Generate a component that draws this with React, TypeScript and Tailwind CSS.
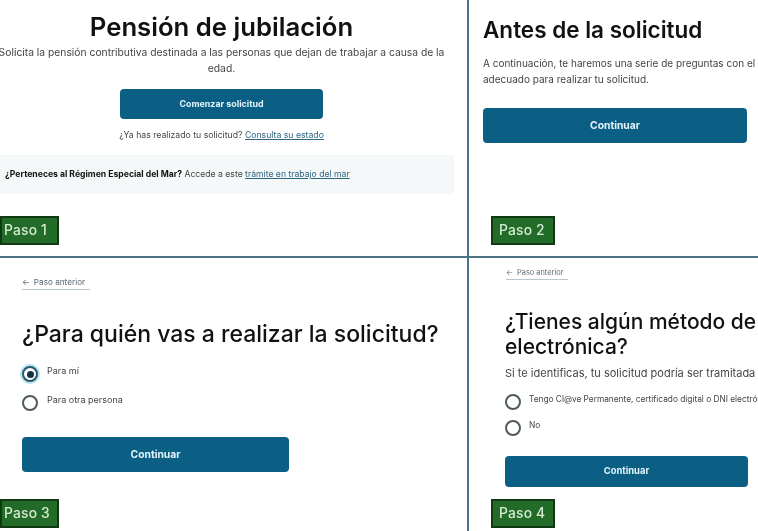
const font = { fontFamily: "Inter, 'Liberation Sans', sans-serif" };

const PasoBadge = ({ label, className }: { label: string; className: string }) => (
  <div
    className={`absolute flex h-[29px] items-center border-2 border-[#0f3a14] bg-[#226b28] text-[13.8px] font-medium tracking-[0.2px] text-[#d5ecd0] ${className}`}
  >
    {label}
  </div>
);

const PrimaryButton = ({ label, className }: { label: string; className: string }) => (
  <button className={`flex items-center justify-center rounded-[4px] bg-[#0c5f84] font-bold text-[#e3f5fb] ${className}`}>
    {label}
  </button>
);

const BackLink = ({ className }: { className: string }) => (
  <a className={`flex items-center gap-1 border-b border-[#b9c7cf] whitespace-nowrap text-[#5c6b74] ${className}`}>
    <span>←</span>
    <span>Paso anterior</span>
  </a>
);

const Radio = ({ checked }: { checked?: boolean }) =>
  checked ? (
    <span className="flex h-[16px] w-[16px] shrink-0 items-center justify-center rounded-full border-2 border-[#29566a] bg-white shadow-[0_0_0_2px_#b7e3ef]">
      <span className="h-[7px] w-[7px] rounded-full bg-[#123246]" />
    </span>
  ) : (
    <span className="h-[16px] w-[16px] shrink-0 rounded-full border-2 border-[#4d5a60] bg-white" />
  );

export default function App() {
  return (
    <div
      style={font}
      className="grid h-[531px] w-[758px] grid-cols-[469px_289px] grid-rows-[258px_273px] overflow-hidden bg-white blur-[0.35px]"
    >
      {/* Paso 1 */}
      <section className="relative border-r-2 border-b-2 border-[#4c7286] pt-[10px]">
        <div className="flex w-[443px] flex-col items-center text-center">
          <h1 className="text-[25.7px] leading-[34px] font-semibold text-[#111]">Pensión de jubilación</h1>
          <p className="text-[10.3px] leading-[16px] whitespace-nowrap text-[#444]">
            Solicita la pensión contributiva destinada a las personas que dejan de trabajar a causa de la
            <br />
            edad.
          </p>
          <PrimaryButton label="Comenzar solicitud" className="mt-[13px] h-[30px] w-[203px] text-[8.9px]" />
          <p className="mt-[10px] text-[8.7px] leading-[12px] whitespace-nowrap text-[#444]">
            ¿Ya has realizado tu solicitud? <a className="text-[#2d6580] underline">Consulta su estado</a>
          </p>
        </div>
        <div className="mt-[14px] flex h-[39px] w-[454px] items-center bg-[#f5f8f9] pl-[5px] text-[8.65px] whitespace-nowrap text-[#444]">
          <p>
            <b className="text-[#111]">¿Perteneces al Régimen Especial del Mar?</b> Accede a este{" "}
            <a className="text-[#2d6580] underline">trámite en trabajo del mar</a>
          </p>
        </div>
        <PasoBadge label="Paso 1" className="top-[216px] left-0 w-[59px] pl-[2px]" />
      </section>

      {/* Paso 2 */}
      <section className="relative border-b-2 border-[#4c7286] pt-[15px] pl-[14px]">
        <h2 className="text-[22.5px] leading-[30px] font-semibold text-[#111]">Antes de la solicitud</h2>
        <p className="mt-[10px] w-[300px] text-[10px] leading-[16px] whitespace-nowrap text-[#444]">
          A continuación, te haremos una serie de preguntas con el
          <br />
          adecuado para realizar tu solicitud.
        </p>
        <PrimaryButton label="Continuar" className="mt-[21px] h-[35px] w-[264px] text-[10.3px]" />
        <PasoBadge label="Paso 2" className="top-[216px] left-[22px] w-[64px] pl-[6px]" />
      </section>

      {/* Paso 3 */}
      <section className="relative flex flex-col items-start border-r-2 border-[#4c7286] pt-[18px] pl-[22px]">
        <BackLink className="h-[14px] w-[68px] text-[8.2px]" />
        <h2 className="mt-[28px] text-[23px] leading-[32px] font-medium whitespace-nowrap text-[#111]">
          ¿Para quién vas a realizar la solicitud?
        </h2>
        <div className="mt-[16px] flex flex-col gap-[13px]">
          <div className="flex items-start gap-[9px] text-[9px] text-[#444]">
            <Radio checked />
            <span className="leading-[10px]">Para mí</span>
          </div>
          <div className="flex items-start gap-[9px] text-[9px] text-[#444]">
            <Radio />
            <span className="leading-[10px]">Para otra persona</span>
          </div>
        </div>
        <PrimaryButton label="Continuar" className="mt-[26px] h-[35px] w-[267px] text-[10.3px]" />
        <PasoBadge label="Paso 3" className="top-[241px] left-0 w-[59px] pl-[2px]" />
      </section>

      {/* Paso 4 */}
      <section className="relative flex flex-col items-start overflow-hidden pt-[9px] pl-[36px]">
        <BackLink className="ml-[1px] h-[13px] w-[62px] text-[7.4px]" />
        <h2 className="mt-[29px] w-[300px] text-[21px] leading-[25px] font-medium text-[#111]">
          ¿Tienes algún método de
          <br />
          electrónica?
        </h2>
        <p className="mt-[7px] text-[11px] leading-[14px] whitespace-nowrap text-[#444]">
          Si te identificas, tu solicitud podría ser tramitada más rápido
        </p>
        <div className="mt-[14px] flex flex-col gap-[10px]">
          <div className="flex items-start gap-[8px] text-[8.3px] whitespace-nowrap text-[#444]">
            <Radio />
            <span className="leading-[10px]">Tengo Cl@ve Permanente, certificado digital o DNI electrónico</span>
          </div>
          <div className="flex items-start gap-[8px] text-[8.3px] text-[#444]">
            <Radio />
            <span className="leading-[10px]">No</span>
          </div>
        </div>
        <PrimaryButton label="Continuar" className="mt-[20px] h-[31px] w-[243px] text-[9.4px]" />
        <PasoBadge label="Paso 4" className="top-[241px] left-[22px] w-[64px] pl-[6px]" />
      </section>
    </div>
  );
}
